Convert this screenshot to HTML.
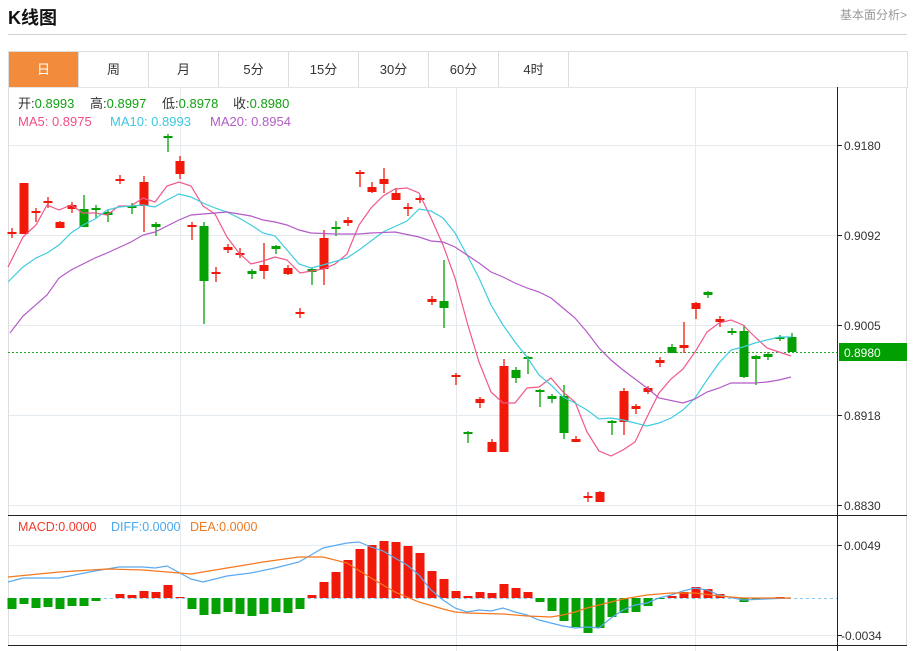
<!DOCTYPE html>
<html><head><meta charset="utf-8"><style>
body{margin:0;width:915px;height:651px;background:#fff;overflow:hidden;font-family:"Liberation Sans","Noto Sans CJK SC",sans-serif;position:relative}
.t{position:absolute;left:8px;top:4px;font-size:18px;font-weight:bold;color:#111}
.r{position:absolute;right:8px;top:6px;font-size:12px;color:#999}
.hl{position:absolute;left:8px;top:34px;width:899px;height:1px;background:#d2d2d2}
.tabs{position:absolute;left:8px;top:51px;width:898px;height:35px;border:1px solid #ddd;border-bottom:1px solid #e4e4e4}
.tab{position:absolute;top:0;height:35px;width:69px;border-right:1px solid #ddd;text-align:center;line-height:35px;font-size:13px;color:#333}
.on{background:#f28b3c;color:#fff}
</style></head><body>
<div class="t">K线图</div><div class="r">基本面分析&gt;</div><div class="hl"></div>
<div class="tabs">
<div class="tab on" style="left:0">日</div><div class="tab" style="left:70px">周</div><div class="tab" style="left:140px">月</div><div class="tab" style="left:210px">5分</div><div class="tab" style="left:280px">15分</div><div class="tab" style="left:350px">30分</div><div class="tab" style="left:420px">60分</div><div class="tab" style="left:490px">4时</div>
</div>
<svg width="915" height="651" style="position:absolute;left:0;top:0" font-family="Liberation Sans, Noto Sans CJK SC, sans-serif">
<g stroke="#e3eaf0" stroke-width="1">
<line x1="8" y1="145.5" x2="837" y2="145.5"/><line x1="8" y1="235.5" x2="837" y2="235.5"/><line x1="8" y1="325.5" x2="837" y2="325.5"/><line x1="8" y1="415.5" x2="837" y2="415.5"/><line x1="8" y1="505.5" x2="837" y2="505.5"/>
<line x1="8" y1="545.5" x2="837" y2="545.5"/><line x1="8" y1="635.5" x2="837" y2="635.5"/>
<line x1="180.5" y1="87" x2="180.5" y2="651"/><line x1="456.5" y1="87" x2="456.5" y2="651"/><line x1="695.5" y1="87" x2="695.5" y2="651"/>
</g>
<line x1="8.5" y1="87" x2="8.5" y2="645" stroke="#ddd"/>
<line x1="906.5" y1="87" x2="906.5" y2="645" stroke="#ddd"/>
<line x1="837.5" y1="87" x2="837.5" y2="651" stroke="#222"/>
<line x1="8" y1="515.5" x2="907" y2="515.5" stroke="#222"/>
<line x1="8" y1="645.5" x2="907" y2="645.5" stroke="#222"/>
<g stroke="#222"><line x1="837" y1="145.5" x2="842" y2="145.5"/><line x1="837" y1="235.5" x2="842" y2="235.5"/><line x1="837" y1="325.5" x2="842" y2="325.5"/><line x1="837" y1="415.5" x2="842" y2="415.5"/><line x1="837" y1="505.5" x2="842" y2="505.5"/><line x1="837" y1="545.5" x2="842" y2="545.5"/><line x1="837" y1="635.5" x2="842" y2="635.5"/></g>
<g font-size="12" fill="#333">
<text x="844" y="150">0.9180</text><text x="844" y="240">0.9092</text><text x="844" y="330">0.9005</text><text x="844" y="420">0.8918</text><text x="844" y="510">0.8830</text><text x="844" y="550">0.0049</text><text x="841" y="640">-0.0034</text>
</g>
<line x1="8" y1="352.5" x2="837" y2="352.5" stroke="#22aa22" stroke-dasharray="2,2"/>
<rect x="839" y="343" width="68" height="18" fill="#00a000"/>
<text x="844" y="357" font-size="12" fill="#fff">0.8980</text>
<g font-size="13">
<text x="18" y="108" fill="#333">开:<tspan fill="#10a010">0.8993</tspan></text>
<text x="90" y="108" fill="#333">高:<tspan fill="#10a010">0.8997</tspan></text>
<text x="162" y="108" fill="#333">低:<tspan fill="#10a010">0.8978</tspan></text>
<text x="233" y="108" fill="#333">收:<tspan fill="#10a010">0.8980</tspan></text>
<text x="18" y="126" fill="#f04e85">MA5: 0.8975</text>
<text x="110" y="126" fill="#3cc8e0">MA10: 0.8993</text>
<text x="210" y="126" fill="#b45cc8">MA20: 0.8954</text>
<text x="18" y="531" fill="#f03a2a" font-size="12.5">MACD:0.0000</text>
<text x="111" y="531" fill="#4aa8f0" font-size="12.5">DIFF:0.0000</text>
<text x="190" y="531" fill="#f07a20" font-size="12.5">DEA:0.0000</text>
</g>
<g id="c"></g>
<g stroke-width="1.2" fill="none">
<polyline stroke="#f0588a" points="8,267 23,237 36,225 47,205 59,210 71,205 83,213 95,213 107,215 119,206 131,206 143,198 155,202 167,186 179,182 191,186 203,206 215,214 227,237 239,253 251,264 263,261 275,257 287,260 300,273 323,269 335,264 347,254 359,225 371,208 383,196 395,189 407,188 419,193 431,218 443,245 455,278 467,322 479,362 491,392 503,403 515,403 527,388 539,387 551,378 563,392 575,402 587,432 599,451 611,456 623,450 635,442 647,417 659,393 671,379 683,369 695,352 707,332 719,323 731,320 743,325 755,337 767,348 779,352 791,356"/>
<polyline stroke="#40cce0" points="8,282 23,267 36,258 47,253 59,245 71,233 83,225 95,219 107,210 119,207 131,206 143,205 155,207 167,200 179,194 191,197 203,203 215,208 227,212 239,218 251,225 263,233 275,236 287,250 299,264 311,268 323,265 347,258 359,250 383,232 407,221 419,209 431,211 443,218 455,233 467,255 479,278 491,305 503,325 515,342 527,357 539,375 551,385 563,397 575,403 587,410 599,419 611,418 623,420 635,423 647,426 659,423 671,418 683,410 695,398 707,380 719,363 731,350 743,347 755,343 767,340 779,337 791,337"/>
<polyline stroke="#b45ac8" points="10,333 23,316 47,295 59,278 71,270 95,258 107,253 131,242 143,235 155,232 179,220 191,215 215,213 227,212 251,216 263,220 275,222 287,225 299,230 311,233 335,234 359,234 371,233 395,232 419,237 431,241 443,242 455,247 467,255 479,263 491,272 503,277 515,283 527,288 539,292 551,298 563,308 575,318 587,332 599,348 611,360 623,370 647,388 659,398 683,403 695,399 707,392 719,388 731,383 755,383 767,382 779,380 791,377"/>
</g>
<line x1="8" y1="598.5" x2="837" y2="598.5" stroke="#8cc8ee" stroke-dasharray="3,3"/>
<g id="m"></g>
<g stroke-width="1.2" fill="none">
<polyline stroke="#5aaaf0" points="8,582 23,578 59,578 95,571 119,567 143,567 155,568 167,566 191,579 203,582 227,576 251,573 275,568 299,562 311,555 323,548 347,543 359,542 371,547 383,551 407,565 419,575 431,590 443,600 455,608 467,612 479,610 491,611 503,608 515,612 527,615 539,620 551,623 563,626 575,628 587,627 599,628 611,618 623,610 635,605 647,603 659,598 671,595 683,591 695,588 707,590 719,595 743,600 791,598"/>
<polyline stroke="#f5781e" points="8,577 59,572 107,569 143,570 167,572 191,574 227,568 263,562 299,557 323,557 347,563 371,578 395,592 419,602 443,609 455,612 467,613 503,614 527,616 551,617 563,615 575,612 587,608 599,605 611,602 623,599 647,595 671,593 695,593 719,596 743,598 791,598"/>
</g>
</svg>
<script>
var C=[
['r',232,234,228,238],['r',183,234,183,234],['r',211,213,208,222],['r',201,203,197,208],['r',222,228,221,228],['r',205,209,202,213],['g',209,227,195,227],['g',208,210,205,218],['g',212,215,210,222],['r',179,181,175,184],
['g',206,208,203,214],['r',182,206,176,232],['g',224,227,222,236],['g',136,138,134,152],['r',161,174,156,179],['r',225,227,222,240],['g',226,281,222,324],['r',272,274,267,282],['r',247,250,244,253],['r',253,255,248,258],
['g',271,274,269,279],['r',265,271,243,279],['g',246,249,245,254],['r',268,274,265,275],['r',312,314,308,318],['g',269,272,267,285],['r',238,269,230,285],['g',227,229,221,236],['r',220,223,217,226],['r',172,174,170,187],
['r',187,192,182,193],['r',179,184,168,193],['r',193,200,188,200],['r',207,209,203,216],['r',198,200,195,203],['r',299,302,296,305],['g',301,308,260,328],['r',375,377,373,385],['g',432,434,431,443],['r',399,403,397,408],
['r',442,452,439,452],['r',366,452,359,452],['g',370,378,367,383],['g',357,359,356,374],['g',390,392,389,407],['g',396,399,394,403],['g',396,433,385,439],['r',439,442,436,442],['r',496,498,492,502],['r',492,502,491,502],
['g',421,423,420,435],['r',391,422,388,435],['r',406,409,404,414],['r',388,392,386,394],['r',360,363,357,367],['g',347,353,344,353],['r',345,348,322,353],['r',303,309,302,319],['g',292,295,291,298],['r',319,322,316,327],
['g',331,333,328,335],['g',331,377,325,378],['g',356,359,355,385],['g',354,357,352,360],['g',337,339,335,341],['g',337,352,333,352]];
var M=[-11,-6,-10,-9,-11,-8,-8,-3,0,4,3,7,6,13,1,-11,-17,-16,-14,-16,-18,-16,-14,-15,-11,3,16,26,38,49,53,57,56,52,45,27,19,7,2,6,5,14,10,6,-4,-13,-23,-29,-35,-30,-19,-15,-14,-8,-1,2,6,11,9,4,0,-4,-1,0,1,0];
var s='',m='';
C.forEach(function(c,i){var x=12+12*i,col=c[0]=='r'?'#f0190a':'#04a004';
s+='<line x1="'+x+'" y1="'+c[3]+'" x2="'+x+'" y2="'+c[4]+'" stroke="'+col+'" stroke-width="1.3"/>';
var h=Math.max(c[2]-c[1],2);s+='<rect x="'+(x-4.5)+'" y="'+c[1]+'" width="9" height="'+h+'" fill="'+col+'"/>';});
M.forEach(function(v,i){if(!v)return;var x=12+12*i;var col=v>0?'#f0190a':'#04a004';m+='<rect x="'+(x-4.5)+'" y="'+(v>0?598-v:598)+'" width="9" height="'+Math.abs(v)+'" fill="'+col+'"/>';});
document.getElementById('c').innerHTML=s;document.getElementById('m').innerHTML=m;
</script>
</body></html>
